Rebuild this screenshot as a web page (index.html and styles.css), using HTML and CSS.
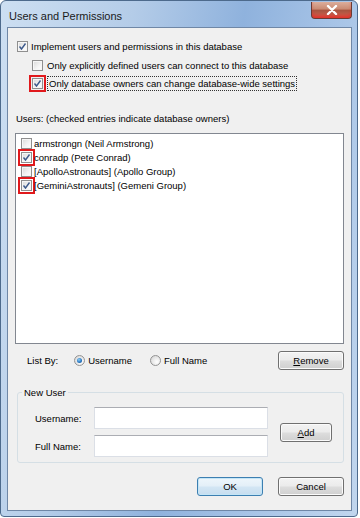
FILE: index.html
```html
<!DOCTYPE html>
<html lang="en">
<head>
    <meta charset="UTF-8">
    <meta name="viewport" content="width=device-width, initial-scale=1.0">
    <title>Users and Permissions</title>
    <link rel="stylesheet" href="styles.css">
</head>
<body>
    <div class="window">
        <div class="titlebar">
            <span class="title">Users and Permissions</span>
            <span class="close">
                <svg width="12" height="10" viewBox="0 0 12 10"><path d="M2 1 L10 9 M10 1 L2 9" stroke="#fff" stroke-width="2.4" stroke-linecap="round"/></svg>
            </span>
        </div>

        <div class="client">
            <div class="check-row first">
                <span class="cb checked"></span>
                <span>Implement users and permissions in this database</span>
            </div>
            <div class="check-row indent">
                <span class="cb"></span>
                <span>Only explicitly defined users can connect to this database</span>
            </div>
            <div class="check-row indent">
                <span class="mark"><span class="cb checked"></span></span>
                <span class="focus">Only database owners can change database-wide settings</span>
            </div>

            <div class="users-label">Users: (checked entries indicate database owners)</div>

            <div class="listbox">
                <div class="list-item"><span class="cb"></span>armstrongn (Neil Armstrong)</div>
                <div class="list-item"><span class="mark"><span class="cb checked"></span></span>conradp (Pete Conrad)</div>
                <div class="list-item"><span class="cb"></span>[ApolloAstronauts] (Apollo Group)</div>
                <div class="list-item"><span class="mark"><span class="cb checked"></span></span>[GeminiAstronauts] (Gemeni Group)</div>
            </div>

            <div class="listby-row">
                <span class="listby-label">List By:</span>
                <span class="radio selected"></span>
                <span class="radio-text">Username</span>
                <span class="radio"></span>
                <span class="radio-text">Full Name</span>
                <button class="btn remove"><u>R</u>emove</button>
            </div>

            <fieldset class="group">
                <legend>New User</legend>
                <div class="group-grid">
                    <span class="field-label first-label">Username:</span>
                    <input type="text" class="field first-field">
                    <button class="btn add"><u>A</u>dd</button>
                    <span class="field-label second-label">Full Name:</span>
                    <input type="text" class="field second-field">
                </div>
            </fieldset>

            <div class="footer">
                <button class="btn default">OK</button>
                <button class="btn">Cancel</button>
            </div>
        </div>
    </div>
</body>
</html>
```

FILE: styles.css
```css
body {
    margin: 0;
    background-color: #ffffff;
    font-family: "Liberation Sans", Arial, sans-serif;
    font-size: 9.5px;
    color: #000;
}
.window {
    width: 358px;
    height: 517px;
    border: 1px solid #4d6a8c;
    border-radius: 6px 6px 4px 4px;
    background: linear-gradient(100deg, #cddff2 0%, #b4cce8 30%, #8fb2dd 55%, #a6c3e6 75%, #c1d6ee 100%);
    display: flex;
    flex-direction: column;
    box-sizing: border-box;
    padding: 0 5px 5px 6px;
}
.titlebar {
    height: 26px;
    display: flex;
    align-items: flex-start;
}
.title {
    margin: 9px 0 0 2px;
    font-size: 11px;
    color: #1a1a1a;
}
.close {
    margin-left: auto;
    margin-top: 1px;
    width: 41px;
    height: 17px;
    border: 1px solid #6b3a33;
    border-top: none;
    border-radius: 0 0 4px 4px;
    background: linear-gradient(#dcae9c 0%, #c98a72 45%, #a8523d 50%, #c8705c 100%);
    display: flex;
    align-items: center;
    justify-content: center;
    box-sizing: border-box;
    box-shadow: inset 0 -4px 4px -2px #e8251f;
}
.client {
    flex: 1;
    background-color: #f0f0f0;
    border: 1px solid #6f87a6;
    padding: 0 7px;
    display: flex;
    flex-direction: column;
}
.check-row {
    display: flex;
    align-items: center;
    height: 18px;
    gap: 3px;
}
.check-row.first {
    margin-top: 9px;
    padding-left: 2px;
    margin-bottom: 1px;
}
.check-row.indent {
    padding-left: 17px;
    gap: 4px;
}
.cb {
    width: 11px;
    height: 11px;
    box-sizing: border-box;
    border: 1px solid #8f8f8f;
    background: linear-gradient(135deg, #d9d9d9 0%, #f4f4f4 60%, #ffffff 100%);
    box-shadow: inset 0 0 0 1px #f6f6f6;
    flex-shrink: 0;
    display: inline-block;
}
.cb.checked {
    background: url("data:image/svg+xml;utf8,<svg xmlns='http://www.w3.org/2000/svg' width='9' height='9'><path d='M1.5 4.5 L3.5 7 L7.5 1.5' fill='none' stroke='%233d5a8c' stroke-width='1.4'/></svg>") center no-repeat, linear-gradient(135deg, #d9d9d9 0%, #f4f4f4 60%, #ffffff 100%);
}
.mark {
    display: inline-flex;
    border: 2px solid #e0191c;
    padding: 1px;
    margin: -3px;
}
.focus {
    outline: 1px dotted #333;
    padding: 1px 1px;
    margin-left: 1px;
}
.users-label {
    margin-top: 20px;
    height: 14px;
    line-height: 14px;
    padding-left: 1px;
}
.listbox {
    margin-top: 7px;
    height: 211px;
    background: #ffffff;
    border: 1px solid #828790;
    box-sizing: border-box;
    padding-top: 2px;
}
.list-item {
    display: flex;
    align-items: center;
    height: 14px;
    gap: 2px;
    padding-left: 5px;
}
.listby-row {
    margin-top: 7px;
    display: flex;
    align-items: center;
    height: 19px;
}
.listby-label {
    margin-left: 12px;
    margin-right: 16px;
}
.radio {
    width: 11px;
    height: 11px;
    border-radius: 50%;
    border: 1px solid #939393;
    box-sizing: border-box;
    background: radial-gradient(circle at 65% 65%, #ffffff 0%, #e4e4e4 60%, #cfcfcf 100%);
    display: inline-flex;
    align-items: center;
    justify-content: center;
}
.radio.selected::after {
    content: "";
    width: 5px;
    height: 5px;
    border-radius: 50%;
    background: radial-gradient(circle at 40% 35%, #8fd0f5 0%, #2a78c4 55%, #15487f 100%);
}
.radio-text {
    margin-left: 3px;
    margin-right: 18px;
}
.btn {
    font-family: inherit;
    font-size: 9.5px;
    color: #000;
    height: 19px;
    border: 1px solid #707070;
    border-radius: 3px;
    background: linear-gradient(#f3f3f3 0%, #ebebeb 48%, #dddddd 52%, #cfcfcf 100%);
    box-shadow: inset 0 0 0 1px #fbfbfb;
    padding: 0;
    cursor: pointer;
}
.btn.remove {
    margin-left: auto;
    width: 66px;
}
.btn.default {
    border-color: #3c7fb1;
    background: linear-gradient(#eef6fb 0%, #e3eff8 48%, #d3e6f4 52%, #c6ddef 100%);
    box-shadow: inset 0 0 0 1px #c4e5f6;
}
.group {
    margin: 16px 0 0 2px;
    padding: 0;
    border: 1px solid #d5dfe5;
    border-radius: 3px;
    height: 77px;
    box-sizing: border-box;
}
.group legend {
    margin-left: 4px;
    padding: 0 2px;
    line-height: 13px;
}
.group-grid {
    display: grid;
    grid-template-columns: 76px 174px 12px 52px;
    grid-template-rows: 22px 22px;
    row-gap: 6px;
    align-items: center;
    margin-top: 8px;
}
.field-label {
    grid-column: 1;
    padding-left: 17px;
}
.first-label, .first-field {
    grid-row: 1;
}
.second-label, .second-field {
    grid-row: 2;
}
.field {
    grid-column: 2;
    width: 174px;
    height: 22px;
    box-sizing: border-box;
    border: 1px solid #dbdfe6;
    border-top-color: #abadb3;
    background: #ffffff;
    margin: 0;
}
.btn.add {
    grid-column: 4;
    grid-row: 1 / span 2;
    width: 52px;
}
.footer {
    margin-top: 14px;
    display: flex;
    justify-content: flex-end;
    gap: 15px;
}
.footer .btn {
    width: 66px;
}
```
